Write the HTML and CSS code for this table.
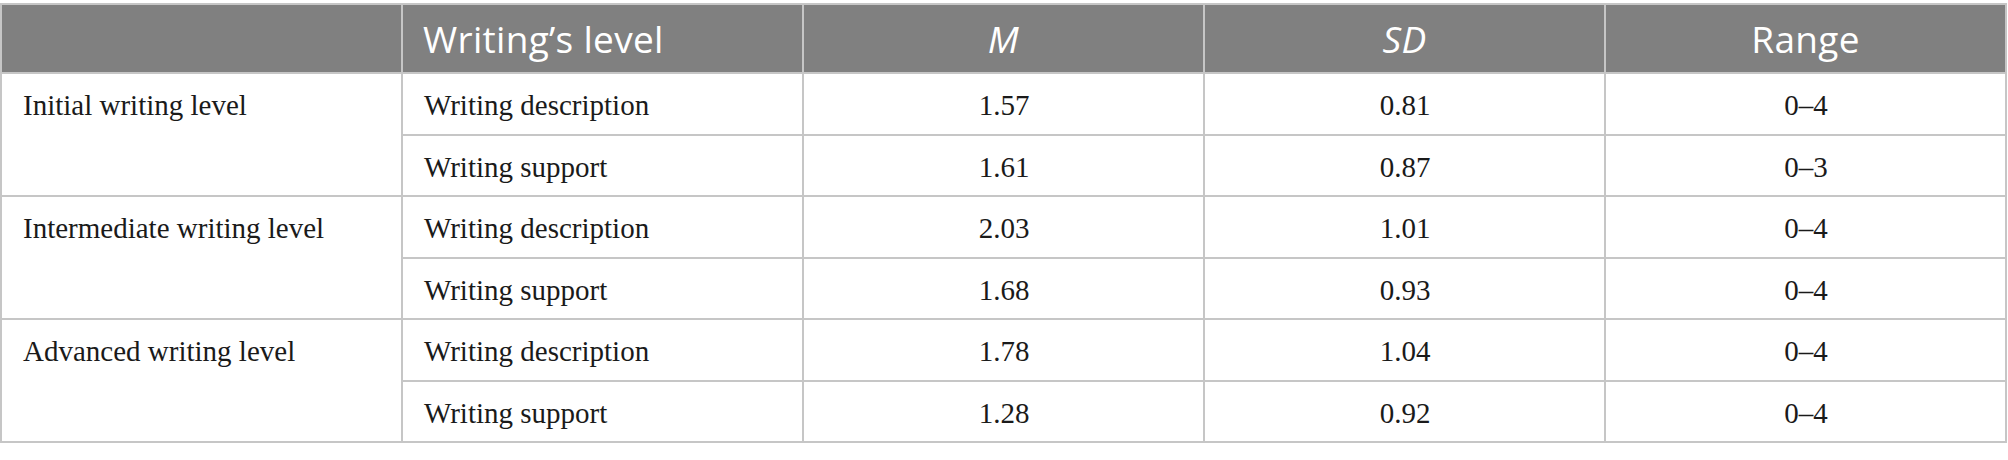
FILE: index.html
```html
<!DOCTYPE html>
<html lang="en">
<head>
<meta charset="utf-8">
<title>Writing levels</title>
<link rel="stylesheet" href="styles.css">
</head>
<body>
<table class="stats">
  <thead>
    <tr class="head-row">
      <th class="c-left"></th>
      <th class="c-left">Writing’s level</th>
      <th class="c-mid"><em>M</em></th>
      <th class="c-mid"><em>SD</em></th>
      <th class="c-mid">Range</th>
    </tr>
  </thead>
  <tbody>
    <tr class="row">
      <td class="c-left group" rowspan="2">Initial writing level</td>
      <td class="c-left">Writing description</td>
      <td class="c-mid">1.57</td>
      <td class="c-mid">0.81</td>
      <td class="c-mid">0–4</td>
    </tr>
    <tr class="row">
      <td class="c-left">Writing support</td>
      <td class="c-mid">1.61</td>
      <td class="c-mid">0.87</td>
      <td class="c-mid">0–3</td>
    </tr>
    <tr class="row">
      <td class="c-left group" rowspan="2">Intermediate writing level</td>
      <td class="c-left">Writing description</td>
      <td class="c-mid">2.03</td>
      <td class="c-mid">1.01</td>
      <td class="c-mid">0–4</td>
    </tr>
    <tr class="row">
      <td class="c-left">Writing support</td>
      <td class="c-mid">1.68</td>
      <td class="c-mid">0.93</td>
      <td class="c-mid">0–4</td>
    </tr>
    <tr class="row">
      <td class="c-left group" rowspan="2">Advanced writing level</td>
      <td class="c-left">Writing description</td>
      <td class="c-mid">1.78</td>
      <td class="c-mid">1.04</td>
      <td class="c-mid">0–4</td>
    </tr>
    <tr class="row">
      <td class="c-left">Writing support</td>
      <td class="c-mid">1.28</td>
      <td class="c-mid">0.92</td>
      <td class="c-mid">0–4</td>
    </tr>
  </tbody>
</table>
</body>
</html>
```

FILE: styles.css
```css
html, body {
  margin: 0;
  padding: 0;
  background: #ffffff;
}

body {
  padding-top: 3px;
}

.stats {
  width: 2007px;
  border-collapse: collapse;
  table-layout: fixed;
  font-family: "Liberation Serif", "Times New Roman", serif;
  font-size: 29px;
  color: #1a1a1a;
}

.stats th,
.stats td {
  border: 2px solid #c6c6c6;
  width: 20%;
  box-sizing: border-box;
}

.head-row {
  height: 69px;
}

.stats th {
  background: #808080;
  color: #ffffff;
  font-family: "Open Sans", "Liberation Sans", sans-serif;
  font-weight: 400;
  font-size: 37px;
  line-height: 42px;
  letter-spacing: 0.3px;
  vertical-align: middle;
  padding: 0 20px;
}

.stats th em {
  font-style: italic;
}

.row {
  height: 61.5px;
}

.stats td {
  vertical-align: top;
  line-height: 34px;
  padding: 14px 20px 0 21px;
}

.c-left {
  text-align: left;
}

.c-mid {
  text-align: center;
}
```
